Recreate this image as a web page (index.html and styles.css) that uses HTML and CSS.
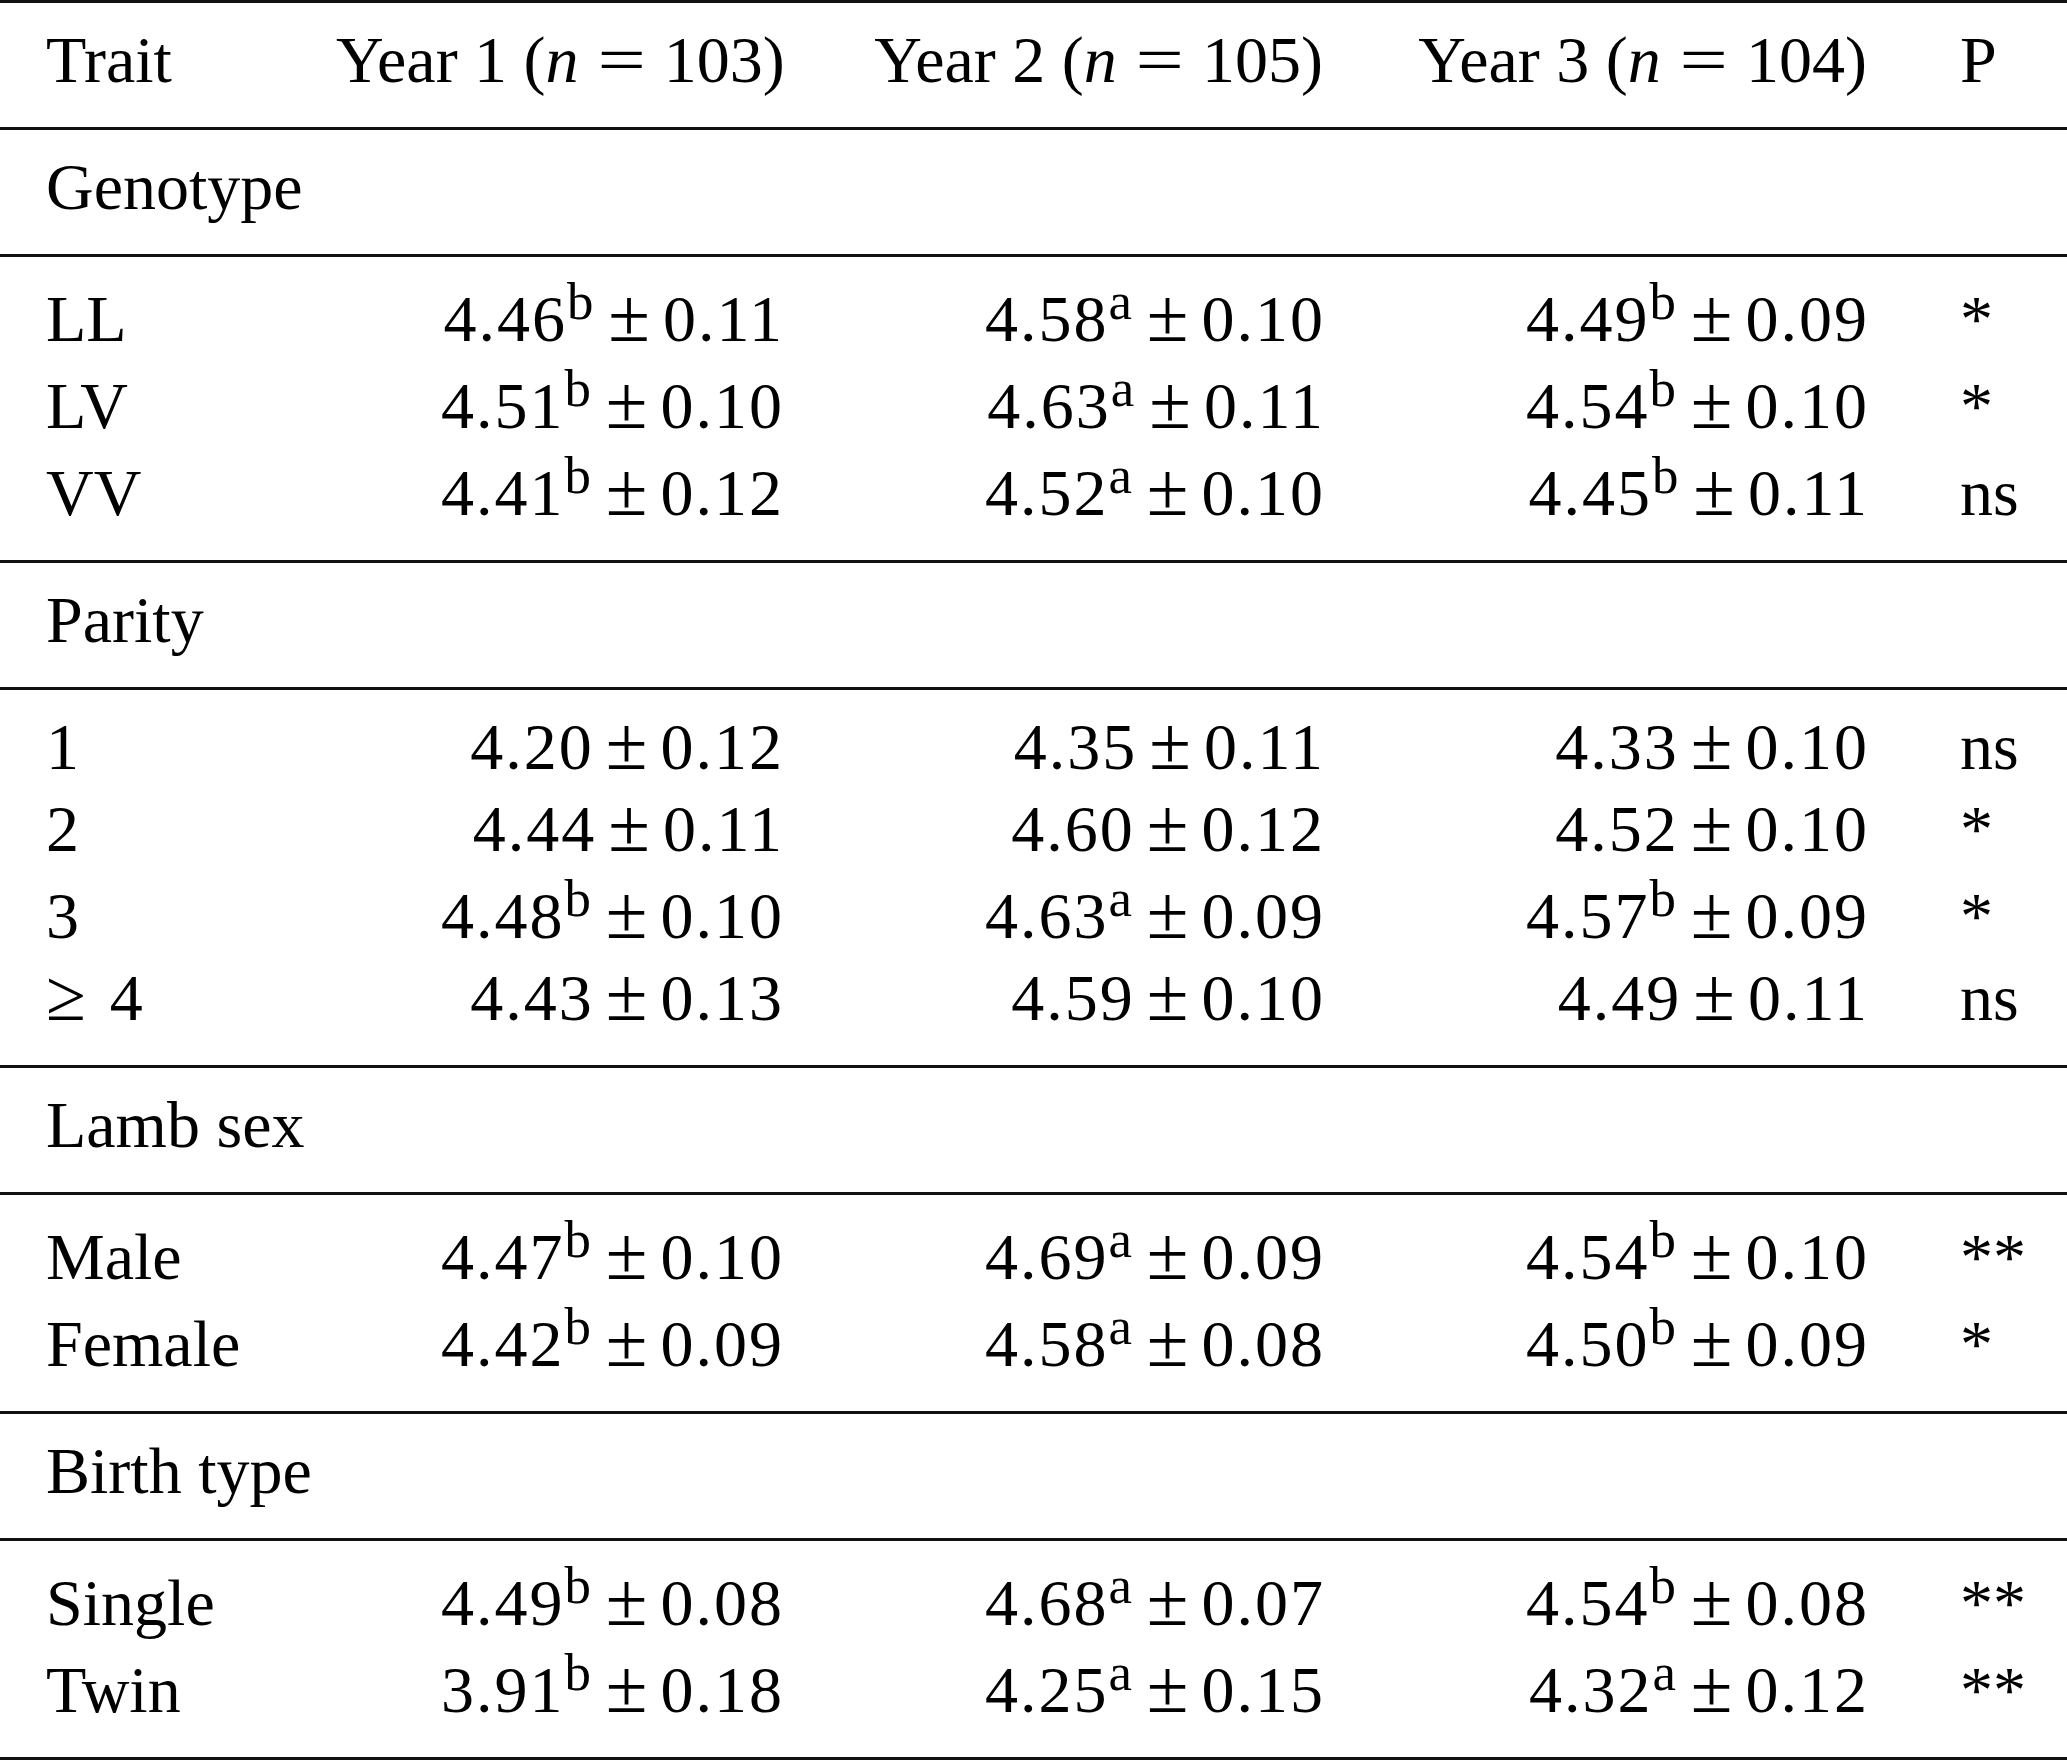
FILE: index.html
```html
<!DOCTYPE html>
<html lang="en">
<head>
<meta charset="utf-8">
<title>Trait by year</title>
<link rel="stylesheet" href="styles.css">
</head>
<body>
<table class="data-table">
  <colgroup>
    <col class="c-trait">
    <col class="c-y1">
    <col class="c-y2">
    <col class="c-y3">
    <col class="c-p">
  </colgroup>
  <thead>
    <tr>
      <th class="trait">Trait</th>
      <th class="num">Year 1 (<i>n</i><span class="eq">=</span>103)</th>
      <th class="num">Year 2 (<i>n</i><span class="eq">=</span>105)</th>
      <th class="num">Year 3 (<i>n</i><span class="eq">=</span>104)</th>
      <th class="p">P</th>
    </tr>
  </thead>
  <tbody class="section">
    <tr><td class="trait" colspan="5">Genotype</td></tr>
  </tbody>
  <tbody class="group">
    <tr>
      <td class="trait">LL</td>
      <td class="num">4.46<sup>b</sup><span class="pm">±</span>0.11</td>
      <td class="num">4.58<sup>a</sup><span class="pm">±</span>0.10</td>
      <td class="num">4.49<sup>b</sup><span class="pm">±</span>0.09</td>
      <td class="p">*</td>
    </tr>
    <tr>
      <td class="trait">LV</td>
      <td class="num">4.51<sup>b</sup><span class="pm">±</span>0.10</td>
      <td class="num">4.63<sup>a</sup><span class="pm">±</span>0.11</td>
      <td class="num">4.54<sup>b</sup><span class="pm">±</span>0.10</td>
      <td class="p">*</td>
    </tr>
    <tr>
      <td class="trait">VV</td>
      <td class="num">4.41<sup>b</sup><span class="pm">±</span>0.12</td>
      <td class="num">4.52<sup>a</sup><span class="pm">±</span>0.10</td>
      <td class="num">4.45<sup>b</sup><span class="pm">±</span>0.11</td>
      <td class="p">ns</td>
    </tr>
  </tbody>
  <tbody class="section">
    <tr><td class="trait" colspan="5">Parity</td></tr>
  </tbody>
  <tbody class="group">
    <tr>
      <td class="trait">1</td>
      <td class="num">4.20<span class="pm">±</span>0.12</td>
      <td class="num">4.35<span class="pm">±</span>0.11</td>
      <td class="num">4.33<span class="pm">±</span>0.10</td>
      <td class="p">ns</td>
    </tr>
    <tr>
      <td class="trait">2</td>
      <td class="num">4.44<span class="pm">±</span>0.11</td>
      <td class="num">4.60<span class="pm">±</span>0.12</td>
      <td class="num">4.52<span class="pm">±</span>0.10</td>
      <td class="p">*</td>
    </tr>
    <tr>
      <td class="trait">3</td>
      <td class="num">4.48<sup>b</sup><span class="pm">±</span>0.10</td>
      <td class="num">4.63<sup>a</sup><span class="pm">±</span>0.09</td>
      <td class="num">4.57<sup>b</sup><span class="pm">±</span>0.09</td>
      <td class="p">*</td>
    </tr>
    <tr>
      <td class="trait"><span class="rel">≥</span>4</td>
      <td class="num">4.43<span class="pm">±</span>0.13</td>
      <td class="num">4.59<span class="pm">±</span>0.10</td>
      <td class="num">4.49<span class="pm">±</span>0.11</td>
      <td class="p">ns</td>
    </tr>
  </tbody>
  <tbody class="section">
    <tr><td class="trait" colspan="5">Lamb sex</td></tr>
  </tbody>
  <tbody class="group">
    <tr>
      <td class="trait">Male</td>
      <td class="num">4.47<sup>b</sup><span class="pm">±</span>0.10</td>
      <td class="num">4.69<sup>a</sup><span class="pm">±</span>0.09</td>
      <td class="num">4.54<sup>b</sup><span class="pm">±</span>0.10</td>
      <td class="p">**</td>
    </tr>
    <tr>
      <td class="trait">Female</td>
      <td class="num">4.42<sup>b</sup><span class="pm">±</span>0.09</td>
      <td class="num">4.58<sup>a</sup><span class="pm">±</span>0.08</td>
      <td class="num">4.50<sup>b</sup><span class="pm">±</span>0.09</td>
      <td class="p">*</td>
    </tr>
  </tbody>
  <tbody class="section">
    <tr><td class="trait" colspan="5">Birth type</td></tr>
  </tbody>
  <tbody class="group">
    <tr>
      <td class="trait">Single</td>
      <td class="num">4.49<sup>b</sup><span class="pm">±</span>0.08</td>
      <td class="num">4.68<sup>a</sup><span class="pm">±</span>0.07</td>
      <td class="num">4.54<sup>b</sup><span class="pm">±</span>0.08</td>
      <td class="p">**</td>
    </tr>
    <tr>
      <td class="trait">Twin</td>
      <td class="num">3.91<sup>b</sup><span class="pm">±</span>0.18</td>
      <td class="num">4.25<sup>a</sup><span class="pm">±</span>0.15</td>
      <td class="num">4.32<sup>a</sup><span class="pm">±</span>0.12</td>
      <td class="p">**</td>
    </tr>
  </tbody>
</table>
</body>
</html>
```
FILE: styles.css
```css
html, body {
  margin: 0;
  padding: 0;
  background: #ffffff;
}

body {
  font-family: "Liberation Serif", "Times New Roman", serif;
  font-size: 66px;
  color: #000000;
}

.data-table {
  width: 2067px;
  table-layout: fixed;
  border-collapse: separate;
  border-spacing: 0;
}

.c-trait { width: 336px; }
.c-y1 { width: 448px; }
.c-y2 { width: 541px; }
.c-y3 { width: 544px; }
.c-p { width: 198px; }

th,
td {
  padding: 0;
  line-height: 82px;
  font-weight: normal;
  white-space: nowrap;
  vertical-align: baseline;
}

thead th {
  padding-top: 16px;
  padding-bottom: 26px;
  border-top: 3px solid #111111;
  border-bottom: 3px solid #111111;
}

.section td {
  padding-top: 16px;
  padding-bottom: 26px;
  border-bottom: 3px solid #111111;
}

.group tr:first-child td {
  padding-top: 16px;
}

.group tr:last-child td {
  padding-bottom: 26px;
  border-bottom: 3px solid #111111;
}

.trait {
  text-align: left;
  padding-left: 46px;
}

.num {
  text-align: right;
  padding-right: 2px;
}

td.num {
  letter-spacing: 2px;
  padding-right: 0;
}

.p {
  text-align: left;
  padding-left: 91px;
}

sup {
  font-size: 0.8em;
  line-height: 57px;
  vertical-align: 22px;
  letter-spacing: 0;
  margin-right: 3px;
}

.pm {
  display: inline-block;
  font-size: 1.15em;
  line-height: 0;
  letter-spacing: 0;
  margin: 0 13px 0 12px;
}

.eq {
  display: inline-block;
  transform: scaleX(1.3);
  margin: 0 24px;
}

.rel {
  display: inline-block;
  font-size: 1.1em;
  line-height: 0;
  margin-right: 24px;
}
```
